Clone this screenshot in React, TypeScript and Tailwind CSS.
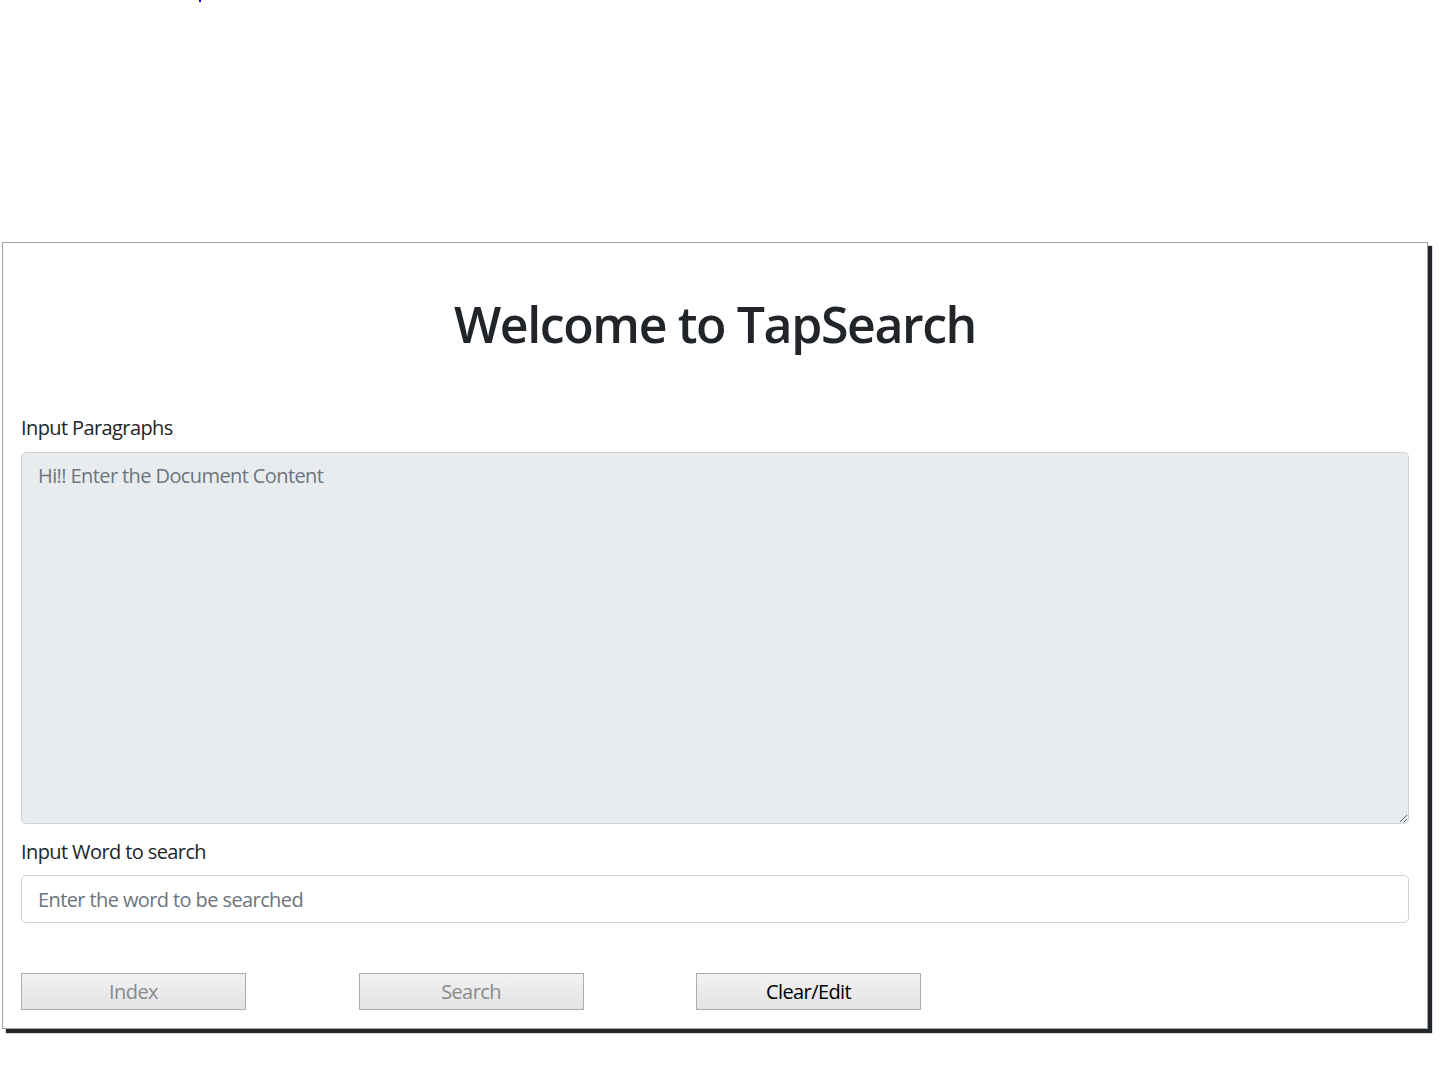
import React from "react";

export default function App() {
  const font = { fontFamily: '"Segoe UI", "Open Sans", sans-serif' };
  const btn =
    "h-[37px] w-[225px] border border-[#adadad] bg-gradient-to-b from-[#f2f2f2] to-[#e3e3e3] pt-[1px] text-[20px] leading-none tracking-[-0.6px]";
  return (
    <div className="min-h-[1074px] w-[1453px] bg-white text-[#212529]" style={font}>
      <div className="h-[242px] pl-[199px]">
        <div className="h-[2px] w-[2px] bg-[#0000ff]" />
      </div>
      <div className="ml-[2px] w-[1426px] border border-[#a3a3a3] bg-white px-[18px] pb-[18px] pt-[51px] shadow-[4px_4px_1px_#23272b]">
        <h1 className="text-center text-[50px] font-semibold leading-[60px] tracking-[-1.4px] text-[#212529]">
          Welcome to TapSearch
        </h1>
        <div className="mt-[58px]">
          <label className="block pt-[1px] text-[20px] leading-[29px] tracking-[-0.6px]">Input Paragraphs</label>
          <textarea
            readOnly
            placeholder="Hi!! Enter the Document Content"
            className="mt-[10px] block h-[372px] w-full resize-y rounded-[5px] border border-[#ced4da] bg-[#e9ecef] px-[16px] py-[8px] text-[20px] leading-[30px] tracking-[-0.6px] text-[#495057] placeholder:text-[#6c757d] outline-none"
          />
        </div>
        <div className="mt-[12px]">
          <label className="block pt-[1px] text-[20px] leading-[29px] tracking-[-0.6px]">Input Word to search</label>
          <input
            placeholder="Enter the word to be searched"
            className="mt-[9px] block h-[48px] w-full rounded-[5px] border border-[#ced4da] bg-white px-[16px] pt-[1px] text-[20px] tracking-[-0.6px] text-[#495057] placeholder:text-[#6c757d] outline-none"
          />
        </div>
        <div className="mt-[50px] flex gap-[112.5px]">
          <button disabled className={`${btn} text-[#8a8a8a]`}>
            Index
          </button>
          <button disabled className={`${btn} text-[#8a8a8a]`}>
            Search
          </button>
          <button className={`${btn} text-black`}>Clear/Edit</button>
        </div>
      </div>
    </div>
  );
}
